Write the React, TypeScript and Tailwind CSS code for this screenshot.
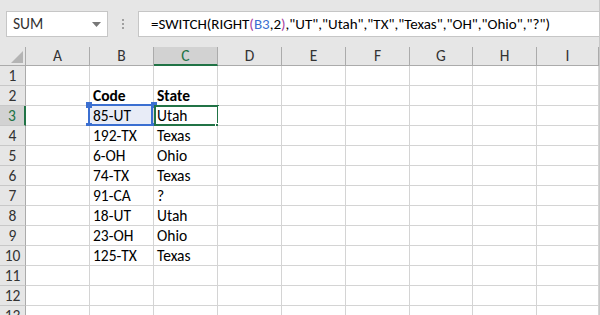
const COLS = [
  { key: "A", w: "w-[64px]" },
  { key: "B", w: "w-[64px]" },
  { key: "C", w: "w-[64px]" },
  { key: "D", w: "w-[64px]" },
  { key: "E", w: "w-[64px]" },
  { key: "F", w: "w-[64px]" },
  { key: "G", w: "w-[63px]" },
  { key: "H", w: "w-[64px]" },
  { key: "I", w: "w-[62px]" },
];

const DATA: Record<number, [string, string]> = {
  2: ["Code", "State"],
  3: ["85-UT", "Utah"],
  4: ["192-TX", "Texas"],
  5: ["6-OH", "Ohio"],
  6: ["74-TX", "Texas"],
  7: ["91-CA", "?"],
  8: ["18-UT", "Utah"],
  9: ["23-OH", "Ohio"],
  10: ["125-TX", "Texas"],
};

const ROWS = [1, 2, 3, 4, 5, 6, 7, 8, 9, 10, 11, 12, 13];

function Handle({ pos }: { pos: string }) {
  return <div className={`absolute h-[6px] w-[6px] bg-[#3b6fd1] ${pos}`} />;
}

function Cell({ row, col }: { row: number; col: string }) {
  const d = DATA[row];
  let text = "";
  if (d && col === "B") text = d[0];
  if (d && col === "C") text = d[1];
  const bold = row === 2;
  const w = COLS.find((c) => c.key === col)!.w;
  const isB3 = row === 3 && col === "B";
  const isC3 = row === 3 && col === "C";
  return (
    <div
      className={`relative h-[20px] shrink-0 border-r border-b border-[#d4d4d4] pl-[3px] text-[15.5px] leading-[20px] text-black ${w} ${
        isB3 ? "bg-[#e8ecf7]" : "bg-white"
      } ${bold ? "font-bold" : ""}`}
    >
      {text}
      {isB3 && (
        <>
          <div className="absolute top-[-2px] left-[-2px] h-[22px] w-[65px] border-2 border-[#3b6fd1]" />
          <Handle pos="top-[-4px] left-[-4px]" />
          <Handle pos="top-[-4px] right-[-4px]" />
          <Handle pos="bottom-[-4px] left-[-4px]" />
          <Handle pos="bottom-[-4px] right-[-4px]" />
        </>
      )}
      {isC3 && (
        <>
          <div className="absolute top-[-1px] left-[0px] h-[21px] w-[65px] border-2 border-[#217346]" />
          <div className="absolute right-[-3px] bottom-[-3px] h-[5px] w-[5px] border border-white bg-[#217346]" />
        </>
      )}
    </div>
  );
}

export default function App() {
  return (
    <div
      className="h-[315px] w-[600px] overflow-hidden border-r border-[#c8c8c8] bg-[#e6e6e6]"
      style={{ fontFamily: "Calibri, Carlito, 'Liberation Sans', sans-serif" }}
    >
      {/* Formula bar */}
      <div className="flex h-[47px] items-start pt-[11px]">
        <div className="ml-[6px] flex h-[26px] w-[102px] items-center justify-between border border-[#c6c6c6] bg-white pr-[6px] pl-[6px]">
          <span className="text-[15.5px] text-[#333]">SUM</span>
          <svg width="9" height="5" viewBox="0 0 9 5">
            <path d="M0 0h9L4.5 5z" fill="#777" />
          </svg>
        </div>
        <div className="flex h-[26px] w-[30px] flex-col items-center justify-center gap-[2px]">
          <div className="h-[2px] w-[2px] bg-[#a0a0a0]" />
          <div className="h-[2px] w-[2px] bg-[#a0a0a0]" />
          <div className="h-[2px] w-[2px] bg-[#a0a0a0]" />
        </div>
        <div className="flex h-[26px] flex-1 items-center border border-r-0 border-[#c6c6c6] bg-white pl-[12px] text-[15px] whitespace-nowrap text-black">
          =SWITCH(RIGHT<span className="text-[#a53ea0]">(</span>
          <span className="text-[#3b6fd1]">B3</span>,2
          <span className="text-[#a53ea0]">)</span>
          ,"UT","Utah","TX","Texas","OH","Ohio","?")
        </div>
      </div>

      {/* Column headers */}
      <div className="flex h-[19px]">
        <div className="relative h-[19px] w-[26px] shrink-0 border-r border-b border-[#ababab]">
          <svg className="absolute top-[4px] left-[11px]" width="12" height="12" viewBox="0 0 12 12">
            <path d="M12 0V12H0z" fill="#b4b4b4" />
          </svg>
        </div>
        {COLS.map((c) => (
          <div
            key={c.key}
            className={`flex h-[19px] shrink-0 items-center justify-center text-[15.5px] ${c.w} ${
              c.key === "C"
                ? "border-r border-b-2 border-r-[#ababab] border-b-[#217346] bg-[#d2d2d2] text-[#217346]"
                : "border-r border-b border-[#ababab] text-[#333]"
            }`}
          >
            {c.key}
          </div>
        ))}
      </div>

      {/* Rows */}
      {ROWS.map((r) => (
        <div key={r} className="flex h-[20px]">
          <div
            className={`flex h-[20px] w-[26px] shrink-0 items-center justify-center border-b border-[#c8c8c8] text-[15.5px] ${
              r === 3
                ? "border-r-2 border-r-[#217346] bg-[#d2d2d2] text-[#217346]"
                : "border-r border-r-[#ababab] text-[#333]"
            }`}
          >
            {r}
          </div>
          {COLS.map((c) => (
            <Cell key={c.key} row={r} col={c.key} />
          ))}
        </div>
      ))}
    </div>
  );
}
